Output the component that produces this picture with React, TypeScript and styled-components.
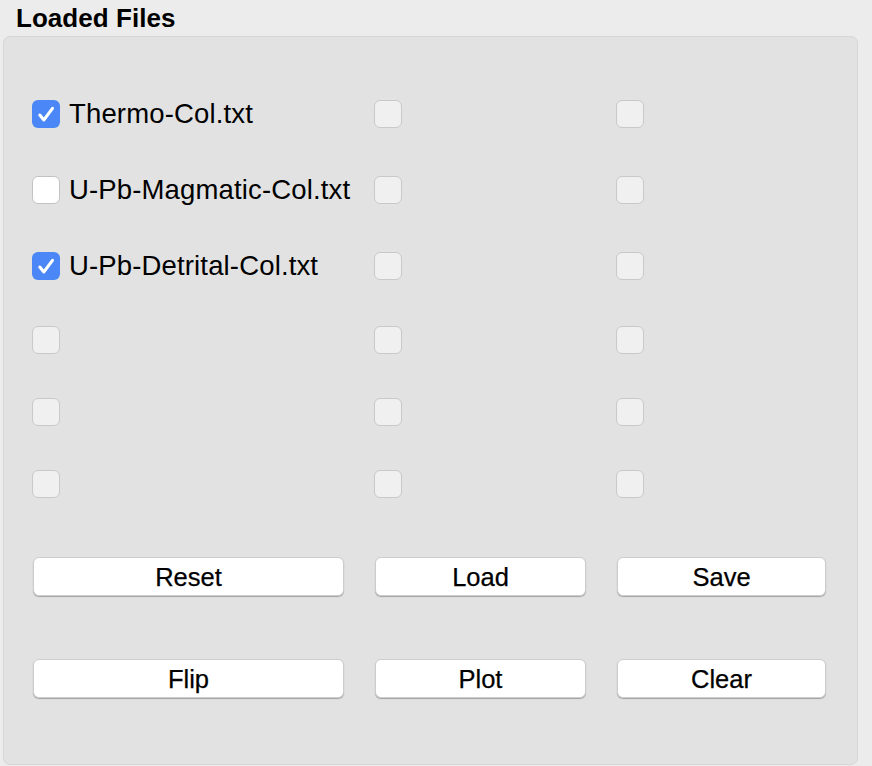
import React from "react";
import styled, { createGlobalStyle } from "styled-components";

const Global = createGlobalStyle`
  html, body {
    margin: 0;
    padding: 0;
    background: #ececec;
    font-family: "Liberation Sans", Arial, sans-serif;
    color: #000;
  }
  * { box-sizing: border-box; }
`;

const Page = styled.div`
  width: 872px;
  height: 766px;
  overflow: hidden;
  display: flex;
  flex-direction: column;
  padding: 3px 14px 0 3px;
`;

const Title = styled.div`
  font-size: 26px;
  font-weight: 700;
  line-height: 30px;
  height: 33px;
  padding-left: 13px;
  letter-spacing: 0.05px;
`;

const Panel = styled.div`
  flex: 1;
  background: #e2e2e2;
  border: 1px solid #d6d6d6;
  border-radius: 7px;
  margin-bottom: 1px;
  padding: 63px 0 0 28px;
  display: flex;
  flex-direction: column;
`;

const Row = styled.div<{ $h: number }>`
  display: grid;
  grid-template-columns: 342px 242px 1fr;
  height: ${(p) => p.$h}px;
  align-items: start;
`;

const Cell = styled.div`
  display: flex;
  align-items: center;
  height: 28px;
  gap: 9px;
`;

const Box = styled.div<{ $state: "checked" | "empty" | "disabled" }>`
  width: 28px;
  height: 28px;
  flex: none;
  border-radius: 6px;
  display: flex;
  align-items: center;
  justify-content: center;
  background: ${(p) =>
    p.$state === "checked" ? "#4b87f6" : p.$state === "empty" ? "#ffffff" : "#f0f0f0"};
  border: ${(p) =>
    p.$state === "checked" ? "none" : p.$state === "empty" ? "1px solid #c3c3c3" : "1px solid #c9c9c9"};
`;

const Label = styled.span`
  font-size: 27.5px;
  letter-spacing: 0.15px;
  white-space: nowrap;
`;

const Button = styled.div<{ $w: number }>`
  width: ${(p) => p.$w}px;
  height: 39px;
  margin-left: 1px;
  background: #ffffff;
  border-radius: 6px;
  border: 0.5px solid #cdcdcd;
  box-shadow: 0 1px 1px rgba(0, 0, 0, 0.28);
  display: flex;
  align-items: center;
  justify-content: center;
  font-size: 25.5px;
  -webkit-text-stroke: 0.25px #000;
  padding-top: 1px;
`;

const Check = () => (
  <svg width="28" height="28" viewBox="0 0 28 28">
    <path
      d="M7.8 15 L11.8 20 L20.5 8.3"
      fill="none"
      stroke="#fff"
      strokeWidth="3"
      strokeLinecap="round"
      strokeLinejoin="round"
    />
  </svg>
);

type State = "checked" | "empty" | "disabled";

const CheckBox = ({ state }: { state: State }) => (
  <Box $state={state}>{state === "checked" ? <Check /> : null}</Box>
);

const rows: { label?: string; state: State; h: number }[] = [
  { label: "Thermo-Col.txt", state: "checked", h: 76 },
  { label: "U-Pb-Magmatic-Col.txt", state: "empty", h: 76 },
  { label: "U-Pb-Detrital-Col.txt", state: "checked", h: 74 },
  { state: "disabled", h: 72 },
  { state: "disabled", h: 72 },
  { state: "disabled", h: 87 },
];

const buttonRows = [
  { names: ["Reset", "Load", "Save"], h: 102 },
  { names: ["Flip", "Plot", "Clear"], h: 60 },
];

const widths = [311, 211, 209];

export default function App() {
  return (
    <>
      <Global />
      <Page>
        <Title>Loaded Files</Title>
        <Panel>
          {rows.map((r, i) => (
            <Row key={i} $h={r.h}>
              <Cell>
                <CheckBox state={r.state} />
                {r.label ? <Label>{r.label}</Label> : null}
              </Cell>
              <Cell>
                <CheckBox state="disabled" />
              </Cell>
              <Cell>
                <CheckBox state="disabled" />
              </Cell>
            </Row>
          ))}
          {buttonRows.map((br, i) => (
            <Row key={`b${i}`} $h={br.h}>
              {br.names.map((n, j) => (
                <Button key={n} $w={widths[j]}>
                  {n}
                </Button>
              ))}
            </Row>
          ))}
        </Panel>
      </Page>
    </>
  );
}
